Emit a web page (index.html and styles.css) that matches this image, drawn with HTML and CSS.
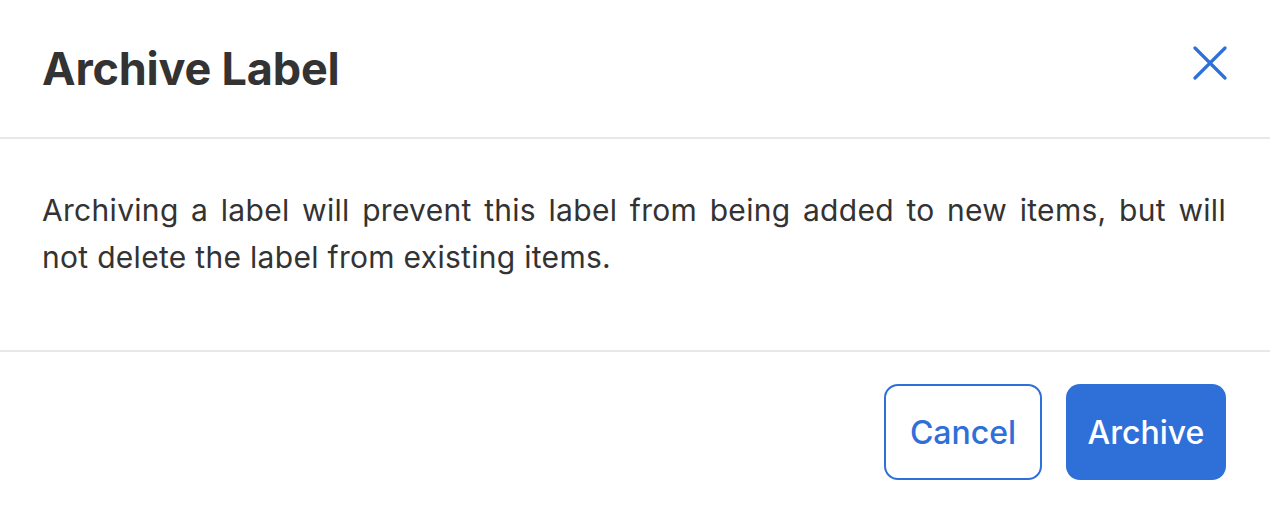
FILE: index.html
```html
<!DOCTYPE html>
<html lang="en">
<head>
    <meta charset="UTF-8">
    <meta name="viewport" content="width=device-width, initial-scale=1.0">
    <title>Archive Label</title>
    <link rel="stylesheet" href="styles.css">
</head>
<body>
    <div class="modal">
        <!-- Header -->
        <div class="modal-header">
            <h1>Archive Label</h1>
            <button class="close-btn" aria-label="Close">
                <svg width="34" height="34" viewBox="0 0 34 34" fill="none">
                    <path d="M2 2L32 32M32 2L2 32" stroke="currentColor" stroke-width="3.2" stroke-linecap="round"/>
                </svg>
            </button>
        </div>

        <!-- Body -->
        <div class="modal-body">
            <p>Archiving a label will prevent this label from being added to new items, but will not delete the label from existing items.</p>
        </div>

        <!-- Footer -->
        <div class="modal-footer">
            <button class="btn btn-outline">Cancel</button>
            <button class="btn btn-primary">Archive</button>
        </div>
    </div>
</body>
</html>
```

FILE: styles.css
```css
body {
    font-family: Inter, "Noto Sans", sans-serif;
    background-color: #fff;
    color: #333;
    margin: 0;
    padding: 0;
}
.modal {
    width: 1270px;
}
.modal-header {
    display: flex;
    justify-content: space-between;
    align-items: center;
    height: 137px;
    padding: 0 43px 0 42px;
    border-bottom: 2px solid #e8e8e8;
}
h1 {
    margin: 0;
    font-size: 45px;
    font-weight: 700;
    letter-spacing: -0.2px;
    color: #333;
}
.close-btn {
    background: none;
    border: none;
    padding: 0;
    margin-top: -12px;
    color: #2f6fd8;
    cursor: pointer;
    display: flex;
}
.modal-body {
    padding: 48px 44px 0 42px;
    height: 163px;
    border-bottom: 2px solid #e8e8e8;
}
.modal-body p {
    margin: 0;
    font-size: 30px;
    letter-spacing: 0.3px;
    line-height: 47px;
    text-align: justify;
    color: #333;
}
.modal-footer {
    display: flex;
    justify-content: flex-end;
    gap: 24px;
    padding: 32px 44px 0 42px;
}
.btn {
    height: 96px;
    padding: 0 20px;
    font-family: Inter, "Noto Sans", sans-serif;
    font-size: 32px;
    font-weight: 500;
    border-radius: 14px;
    cursor: pointer;
}
.btn-outline {
    width: 158px;
    background: #fff;
    color: #2f6fd8;
    border: 2px solid #2f6fd8;
}
.btn-primary {
    width: 160px;
    background: #2f6fd8;
    color: #fff;
    border: none;
}
```
